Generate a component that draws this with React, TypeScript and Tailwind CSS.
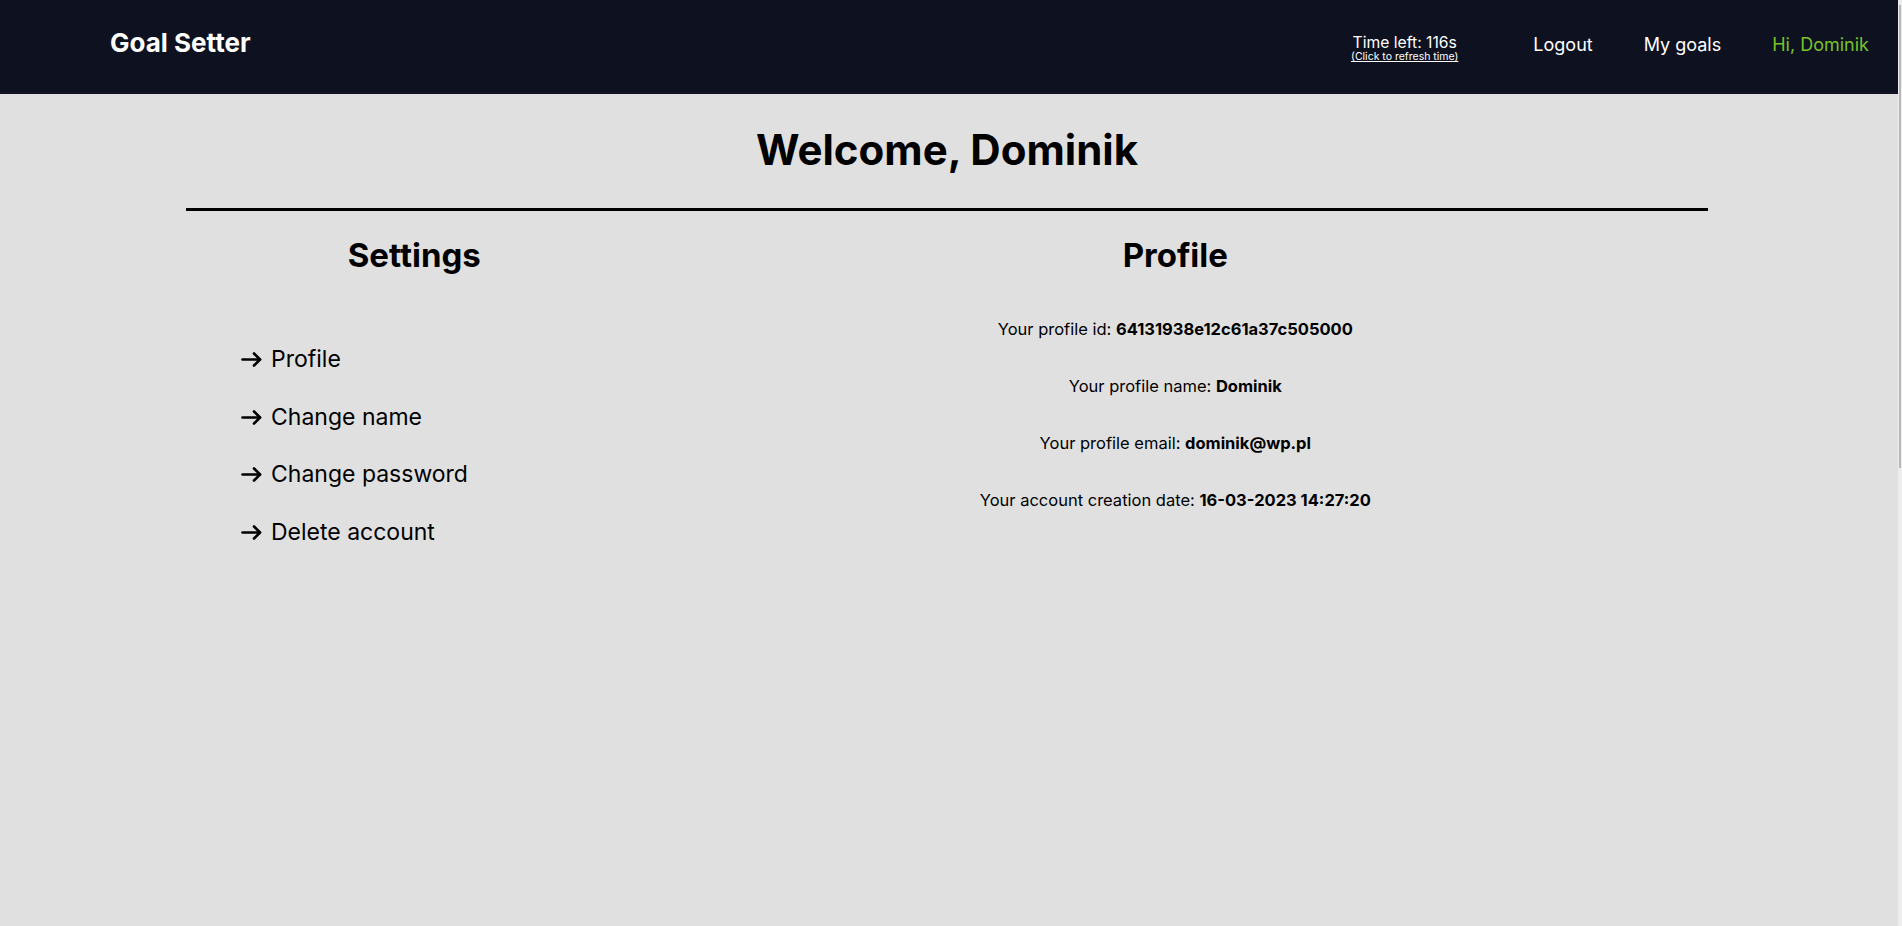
import { useState } from 'react';

function Arrow() {
  return (
    <svg width="21" height="15" viewBox="0 0 21 15" fill="none" stroke="currentColor" strokeWidth="2.6" strokeLinecap="round" strokeLinejoin="round">
      <path d="M1.5 7.5h17.5" />
      <path d="M13 1.5l6 6-6 6" />
    </svg>
  );
}

export default function App() {
  const [seconds] = useState(116);

  const links = ['Profile', 'Change name', 'Change password', 'Delete account'];

  const details = [
    { label: 'Your profile id: ', value: '64131938e12c61a37c505000' },
    { label: 'Your profile name: ', value: 'Dominik' },
    { label: 'Your profile email: ', value: 'dominik@wp.pl' },
    { label: 'Your account creation date: ', value: '16-03-2023 14:27:20' },
  ];

  return (
    <div className="flex min-h-[926px] w-full bg-[#e0e0e0] font-['Inter',sans-serif] text-black">
      <div className="flex flex-1 flex-col">
        {/* Navbar */}
        <header className="flex h-[94px] items-center justify-between bg-[#0e1220] pl-[110px] pr-[29px]">
          <div className="mb-[8px] text-[26px] font-bold leading-none text-white">Goal Setter</div>
          <nav className="flex items-center gap-[51px] text-[18px] leading-none text-white">
            <div className="mr-[24px] mt-[4px] flex flex-col items-center">
              <span className="text-[15.7px] leading-none">Time left: {seconds}s</span>
              <span className="mt-[1px] text-[10.5px] leading-none underline">(Click to refresh time)</span>
            </div>
            <span className="mb-[4px]">Logout</span>
            <span className="mb-[4px]">My goals</span>
            <span className="mb-[4px] text-[#78c22a]">Hi, Dominik</span>
          </nav>
        </header>

        <main className="ml-[186px] flex w-[1522px] flex-col">
          <h1 className="mt-[35px] text-center text-[42px] font-bold leading-none">Welcome, Dominik</h1>
          <div className="mt-[37px] h-[3px] w-full bg-black" />

          <div className="flex w-full">
            {/* Settings */}
            <section className="flex w-[30%] flex-col">
              <h2 className="mt-[28px] text-center text-[33px] font-bold leading-none">Settings</h2>
              <ul className="mt-[76px] flex flex-col gap-[34.7px] pl-[55px]">
                {links.map((l) => (
                  <li key={l} className="flex items-center gap-[9px] text-[23px] leading-none">
                    <Arrow />
                    <span>{l}</span>
                  </li>
                ))}
              </ul>
            </section>

            {/* Profile */}
            <section className="flex w-[70%] flex-col">
              <h2 className="mt-[28px] text-center text-[33px] font-bold leading-none">Profile</h2>
              <div className="mt-[48.5px] flex flex-col gap-[40.5px]">
                {details.map((d) => (
                  <p key={d.label} className="text-center text-[16.5px] leading-none">
                    {d.label}
                    <b className="font-bold">{d.value}</b>
                  </p>
                ))}
              </div>
            </section>
          </div>
        </main>
      </div>

      {/* scrollbar */}
      <div className="flex w-[4px] flex-col bg-[#ededed]">
        <div className="ml-[1px] mt-[5px] h-[463px] w-[2px] bg-[#b8b8b8]" />
      </div>
    </div>
  );
}
